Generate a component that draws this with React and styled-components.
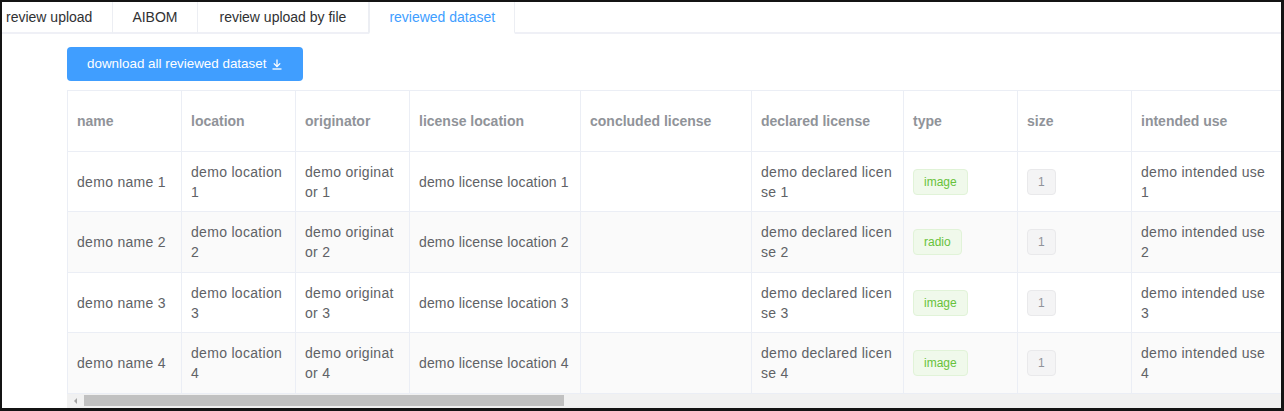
import React from 'react'
import styled, {createGlobalStyle} from 'styled-components'

const GlobalStyle = createGlobalStyle`
    html, body {
        margin: 0;
        padding: 0;
        background: #ffffff;
    }
    body {
        font-family: "Liberation Sans", Arial, sans-serif;
        font-size: 14px;
        color: #606266;
    }
`

const Frame = styled.div`
    width: 1284px;
    height: 411px;
    box-sizing: border-box;
    border-style: solid;
    border-color: #141414;
    border-width: 2px 3px 3px 2px;
    background: #ffffff;
    overflow: hidden;
    display: flex;
    flex-direction: column;
`

const TabBar = styled.div`
    display: flex;
    height: 32px;
    flex-shrink: 0;
    box-sizing: border-box;
`

const Tab = styled.div`
    height: 32px;
    box-sizing: border-box;
    padding: 0 ${props => props.pad}px 0 ${props => props.clipped ? 4 : props.pad}px;
    line-height: 30px;
    font-size: 14px;
    color: ${props => props.active ? '#409eff' : '#303133'};
    border-right: 1px solid #eceef3;
    border-left: ${props => props.active ? '1px solid #eceef3' : 'none'};
    border-bottom: 2px solid ${props => props.active ? 'transparent' : '#eff0f6'};
    white-space: nowrap;
`

const TabFill = styled.div`
    flex: 1;
    border-bottom: 2px solid #eff0f6;
`

const Content = styled.div`
    flex: 1;
    display: flex;
    flex-direction: column;
    align-items: flex-start;
    padding: 13px 0 0 65px;
    min-height: 0;
`

const Button = styled.button`
    height: 34px;
    padding: 0 20px;
    display: flex;
    align-items: center;
    gap: 5px;
    border: none;
    border-radius: 4px;
    background: #409eff;
    color: #ffffff;
    font-family: "Liberation Sans", Arial, sans-serif;
    font-size: 13.4px;
    cursor: pointer;
`

const TableWrap = styled.div`
    margin-top: 9px;
    width: 100%;
    overflow: hidden;
    display: flex;
    flex-direction: column;
`

const Table = styled.table`
    table-layout: fixed;
    border-collapse: collapse;
    width: 1214px;
    border-top: 1px solid #ebeef5;
    border-left: 1px solid #ebeef5;
`

const Th = styled.th`
    height: 60px;
    padding: 0 10px 0 9px;
    text-align: left;
    vertical-align: middle;
    font-weight: bold;
    color: #909399;
    font-size: 14px;
    line-height: 20px;
    border-right: 1px solid #ebeef5;
    border-bottom: 1px solid #ebeef5;
    background: #ffffff;
`

const Tr = styled.tr`
    background: ${props => props.striped ? '#fafafa' : '#ffffff'};
`

const Td = styled.td`
    padding: 10px 10px 9.5px 9px;
    vertical-align: middle;
    font-size: 14px;
    line-height: 20px;
    letter-spacing: ${props => props.spacing}px;
    color: #606266;
    word-break: break-all;
    border-right: 1px solid #ebeef5;
    border-bottom: 1px solid #ebeef5;
`

const Tag = styled.span`
    display: inline-block;
    height: 26px;
    line-height: 24px;
    padding: 0 10px;
    box-sizing: border-box;
    font-size: 12px;
    letter-spacing: 0;
    border-radius: 4px;
    border: 1px solid ${props => props.info ? '#e9e9eb' : '#e1f3d8'};
    background: ${props => props.info ? '#f4f4f5' : '#f0f9eb'};
    color: ${props => props.info ? '#909399' : '#67c23a'};
    vertical-align: middle;
`

const Track = styled.div`
    height: 15px;
    background: #f1f1f1;
    display: flex;
    align-items: center;
`

const Arrow = styled.div`
    width: 17px;
    display: flex;
    justify-content: center;
    span {
        width: 0;
        height: 0;
        border-top: 3px solid transparent;
        border-bottom: 3px solid transparent;
        border-right: 3px solid #a3a3a3;
    }
`

const Thumb = styled.div`
    height: 11px;
    background: #c1c1c1;
`

function DownloadIcon(){
    return (
        <svg width="12" height="12" viewBox="0 0 12 12" fill="none" stroke="#ffffff" strokeWidth="1.3">
            <path d="M6 1.5v7" />
            <path d="M2.8 5.4L6 8.5l3.2-3.1" />
            <path d="M1.5 11h9" />
        </svg>
    )
}

const columns = [
    {key: 'name', title: 'name', width: 114},
    {key: 'location', title: 'location', width: 114},
    {key: 'originator', title: 'originator', width: 114},
    {key: 'licenseLocation', title: 'license location', width: 171, spacing: 0.15},
    {key: 'concluded', title: 'concluded license', width: 171},
    {key: 'declared', title: 'declared license', width: 152},
    {key: 'type', title: 'type', width: 114},
    {key: 'size', title: 'size', width: 114},
    {key: 'intended', title: 'intended use', width: 150},
]

const rows = [1, 2, 3, 4].map((n, i) => ({
    name: 'demo name ' + n,
    location: 'demo location ' + n,
    originator: 'demo originator ' + n,
    licenseLocation: 'demo license location ' + n,
    concluded: '',
    declared: 'demo declared license ' + n,
    type: i === 1 ? 'radio' : 'image',
    size: '1',
    intended: 'demo intended use ' + n,
}))

const tabs = [
    {label: 'review upload', pad: 20},
    {label: 'AIBOM', pad: 19},
    {label: 'review upload by file', pad: 22},
    {label: 'reviewed dataset', pad: 19},
]

function App(){
    return (
        <Frame>
            <GlobalStyle />
            <TabBar>
                {tabs.map((t, i) => (
                    <Tab key={t.label} pad={t.pad} clipped={i === 0} active={i === 3}>{t.label}</Tab>
                ))}
                <TabFill />
            </TabBar>
            <Content>
                <Button>download all reviewed dataset <DownloadIcon /></Button>
                <TableWrap>
                    <Table>
                        <colgroup>
                            {columns.map(c => <col key={c.key} style={{width: c.width}} />)}
                        </colgroup>
                        <thead>
                            <tr>
                                {columns.map(c => <Th key={c.key}>{c.title}</Th>)}
                            </tr>
                        </thead>
                        <tbody>
                            {rows.map((r, i) => (
                                <Tr key={i} striped={i % 2 === 1}>
                                    {columns.map(c => {
                                        const spacing = c.spacing ?? 0.3
                                        if (c.key === 'type') return <Td key={c.key} spacing={spacing}><Tag>{r.type}</Tag></Td>
                                        if (c.key === 'size') return <Td key={c.key} spacing={spacing}><Tag info>{r.size}</Tag></Td>
                                        return <Td key={c.key} spacing={spacing}>{r[c.key]}</Td>
                                    })}
                                </Tr>
                            ))}
                        </tbody>
                    </Table>
                    <Track>
                        <Arrow><span /></Arrow>
                        <Thumb style={{width: 480}} />
                    </Track>
                </TableWrap>
            </Content>
        </Frame>
    )
}

export default App
